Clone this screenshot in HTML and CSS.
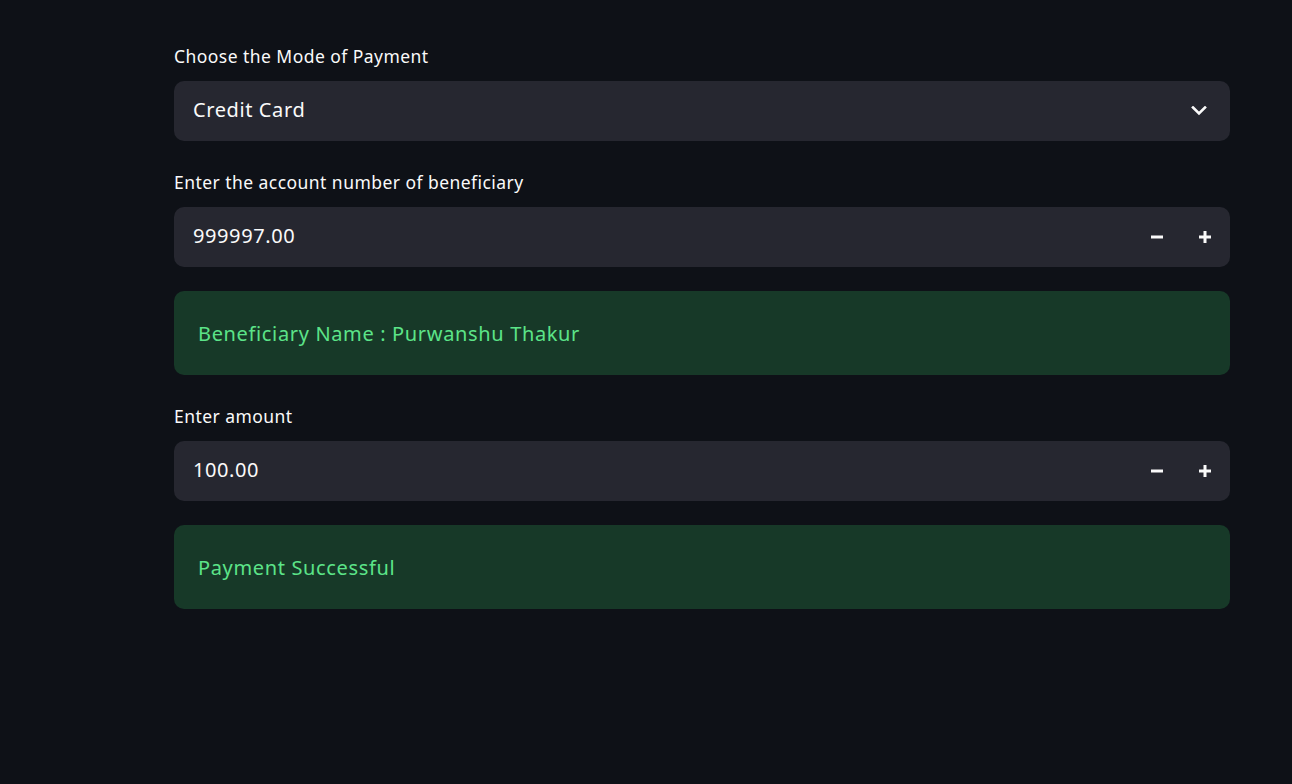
FILE: index.html
```html
<!DOCTYPE html>
<html>
<head>
<meta charset="utf-8">
<link rel="stylesheet" href="styles.css">
</head>
<body>
<main class="page">
  <div class="block">
    <div class="widget">
      <label class="label">Choose the Mode of Payment</label>
      <div class="field">
        <span class="value">Credit Card</span>
        <span class="chevron">
          <svg width="16" height="10" viewBox="0 0 16 10"><path d="M2 1.5 L8 7.5 L14 1.5" fill="none" stroke="#fafafa" stroke-width="2.6" stroke-linecap="square"/></svg>
        </span>
      </div>
    </div>
    <div class="widget">
      <label class="label">Enter the account number of beneficiary</label>
      <div class="field number">
        <span class="value">999997.00</span>
        <span class="step"><svg width="12" height="12" viewBox="0 0 12 12"><rect x="0" y="4.5" width="12" height="3" fill="#fafafa"/></svg></span>
        <span class="step"><svg width="12" height="12" viewBox="0 0 12 12"><rect x="0" y="4.5" width="12" height="3" fill="#fafafa"/><rect x="4.5" y="0" width="3" height="12" fill="#fafafa"/></svg></span>
      </div>
    </div>
    <div class="alert">Beneficiary Name : Purwanshu Thakur</div>
    <div class="widget">
      <label class="label">Enter amount</label>
      <div class="field number">
        <span class="value">100.00</span>
        <span class="step"><svg width="12" height="12" viewBox="0 0 12 12"><rect x="0" y="4.5" width="12" height="3" fill="#fafafa"/></svg></span>
        <span class="step"><svg width="12" height="12" viewBox="0 0 12 12"><rect x="0" y="4.5" width="12" height="3" fill="#fafafa"/><rect x="4.5" y="0" width="3" height="12" fill="#fafafa"/></svg></span>
      </div>
    </div>
    <div class="alert">Payment Successful</div>
  </div>
</main>
</body>
</html>
```
FILE: styles.css
```css
html, body {
  margin: 0;
  padding: 0;
  background: #0e1117;
  height: 100%;
}
body {
  font-family: "Noto Sans", Lato, sans-serif;
  color: #fafafa;
}
.page {
  padding: 39px 62px 0 174px;
}
.block {
  display: flex;
  flex-direction: column;
  gap: 24px;
}
.widget {
  display: flex;
  flex-direction: column;
}
.label {
  display: block;
  font-size: 17.5px;
  letter-spacing: 0.45px;
  line-height: 28px;
  height: 28px;
  margin-top: 3px;
  margin-bottom: 11px;
  color: #fafafa;
}
.field {
  height: 60px;
  background: #262730;
  border-radius: 10px;
  display: flex;
  align-items: center;
  padding-left: 19px;
  box-sizing: border-box;
}
.value {
  flex: 1;
  font-size: 20px;
  letter-spacing: 0.6px;
  line-height: 28px;
  margin-top: -2px;
  color: #fafafa;
}
.chevron {
  width: 16px;
  height: 10px;
  display: flex;
  margin-right: 23px;
}
.number {
  padding-right: 1px;
}
.step {
  width: 48px;
  height: 60px;
  display: flex;
  align-items: center;
  justify-content: center;
}
.alert {
  height: 84px;
  box-sizing: border-box;
  background: #173928;
  border-radius: 10px;
  color: #5ce488;
  font-size: 20px;
  letter-spacing: 0.65px;
  display: flex;
  align-items: center;
  padding-left: 24px;
}
```
